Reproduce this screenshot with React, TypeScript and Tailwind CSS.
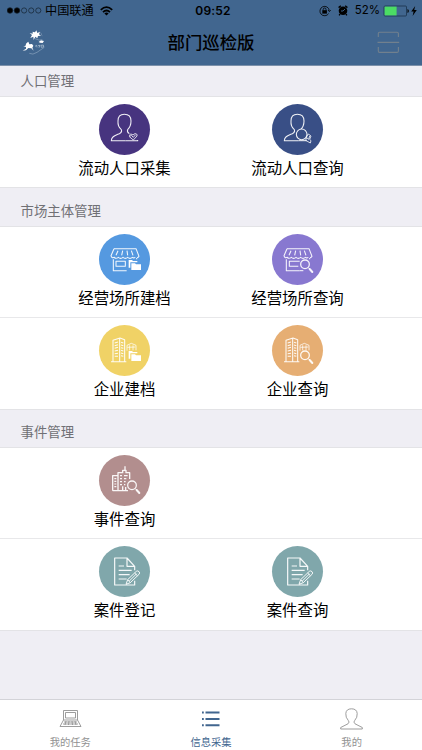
import type { ReactNode } from "react";

const Person = () => (
  <path d="M80 110H37C37 96 50 94 61 89C67 86 69 82 67 77C60 71 56 63 57 51C57 37 65 31 76 31S96 37 96 51C96 63 92 71 86 77C84 82 86 86 91 89" />
);

const Magnifier = () => (
  <>
    <circle cx="99" cy="91" r="13" strokeWidth="3.8" />
    <path d="M109 101L114 106" strokeWidth="3" />
    <path d="M113 105L121 114" strokeWidth="6" strokeLinecap="round" />
  </>
);

const Folders = () => (
  <g fill="#fff" stroke="none">
    <path d="M89 78H99L102 81H115V85H94V101H89Z" />
    <path d="M97 88H108L111 91H126V108H97Z" />
  </g>
);

const PersonCheck = () => (
  <>
    <Person />
    <path d="M80 110H116V108" />
    <path d="M92 96C90 91 96 88 102 93C108 86 116 89 114 96L103 108L91 98L97 94L103 100L110 92" strokeWidth="2.6" />
  </>
);

const PersonSearch = () => (
  <>
    <Person />
    <path d="M80 110H104" />
    <circle cx="89" cy="91" r="16" fill="#394f86" />
    <path d="M102 101L109 90L117 96L113 106L117 110L115 117L101 109L104 101L110 106L113 96" strokeWidth="2.6" />
  </>
);

const Shop = ({ search }: { search?: boolean }) => (
  <>
    <path d="M45 44H111L120 67Q118 71 114 71M45 44L36 65Q38 74 46 70Q50 76 58 70Q65 76 72 70Q79 76 86 70Q93 76 100 70Q104 73 109 70M57 50L51 64M71 50L68 64M84 50L86 64M97 50L102 64" />
    <path d="M43 76V110H83M113 72V76" />
    {search ? <path d="M83 82H52V97H79" /> : <path d="M51 82H79V97H51Z" />}
    {search ? <><path d="M83 110H94" /><Magnifier /></> : <Folders />}
  </>
);

const Tower = ({ search }: { search?: boolean }) => (
  <>
    <path d="M36 110H82M42 109V46L63 39L77 44V109M62 40V109" />
    <path d="M47 54L57 51M47 62L57 59M47 70L57 67M47 78L57 76M47 86L57 85M47 94L57 94M66 52L73 54M66 60L73 62M66 68L73 70M66 76L73 78M66 84L73 86M66 92L73 94" />
    <path d="M84 77V61L97 55L111 61V76M92 61V76M102 61V76M85 67L109 66" strokeWidth="2.4" />
    {search ? <Magnifier /> : <Folders />}
  </>
);

const City = () => (
  <>
    <path d="M41 107V62H57V53H71V46H81V53H92V72M78 34V46M41 107H87M57 62V107M71 94V107M80 96V107" strokeWidth="4" />
    <path d="M46 71H52M46 79H52M46 87H52M46 95H52M63 62H69M75 62H86M63 71H69M75 71H82M63 80H69M75 80H80M63 89H69M75 89H79" strokeWidth="3.5" />
    <Magnifier />
  </>
);

const Document = () => (
  <>
    <path d="M107 104V117H47V36H84L107 61V73M84 36V61H107M59 60H75M59 73H98M59 86H92M59 99H83" strokeWidth="3.6" />
    <path d="M81 115L86 101L112 76Q116 73 120 77T120 85L94 110ZM86 101L94 110M107 81L115 89M91 105L113 83" strokeWidth="3" />
  </>
);

type Entry = { label: string; color: string; icon: ReactNode };
type Section = { title: string; rows: Entry[][] };

const sections: Section[] = [
  {
    title: "人口管理",
    rows: [[
      { label: "流动人口采集", color: "bg-[#47347f]", icon: <PersonCheck /> },
      { label: "流动人口查询", color: "bg-[#394f86]", icon: <PersonSearch /> },
    ]],
  },
  {
    title: "市场主体管理",
    rows: [
      [
        { label: "经营场所建档", color: "bg-[#5599e0]", icon: <Shop /> },
        { label: "经营场所查询", color: "bg-[#8878d0]", icon: <Shop search /> },
      ],
      [
        { label: "企业建档", color: "bg-[#f0d266]", icon: <Tower /> },
        { label: "企业查询", color: "bg-[#e6ae73]", icon: <Tower search /> },
      ],
    ],
  },
  {
    title: "事件管理",
    rows: [
      [{ label: "事件查询", color: "bg-[#b28e8e]", icon: <City /> }],
      [
        { label: "案件登记", color: "bg-[#80a7ab]", icon: <Document /> },
        { label: "案件查询", color: "bg-[#80a7ab]", icon: <Document /> },
      ],
    ],
  },
];

function StatusBar() {
  return (
    <div className="grid h-[21px] grid-cols-3 items-center pr-[5px] pl-[7px] text-[12.5px] leading-none">
      <div className="flex items-center pt-px">
        <svg width="35" height="7" viewBox="0 0 35 7" className="mr-[3px]" fill="none" stroke="#14222f" strokeWidth="0.7">
          <circle cx="3" cy="3.5" r="2.8" fill="#000" />
          <circle cx="10" cy="3.5" r="2.8" fill="#000" />
          <circle cx="17.1" cy="3.5" r="2.6" />
          <circle cx="24.2" cy="3.5" r="2.6" />
          <circle cx="31.3" cy="3.5" r="2.6" />
        </svg>
        <span className="pt-px text-[12.2px] whitespace-nowrap">中国联通</span>
        <svg width="13" height="10" viewBox="0 0 13 10" className="ml-[6px]" fill="none" stroke="#000" strokeWidth="1.8">
          <path d="M.8 3.8Q6.5-1.6 12.2 3.8M3 6.1Q6.5 2.8 10 6.1" />
          <path d="M6.5 9.6L4.4 7.4Q6.5 5.6 8.6 7.4Z" fill="#000" stroke="none" />
        </svg>
      </div>
      <span className="pt-px pl-[2px] text-center font-['Inter','Liberation_Sans',sans-serif] text-[12px] font-semibold tracking-[0.2px]">09:52</span>
      <div className="flex items-center justify-end">
        <svg width="12" height="12" viewBox="0 0 12 12" fill="none" stroke="#000" strokeWidth="0.8">
          <path d="M9.6 8.6A4.7 4.7 0 1 1 10.3 5.5M9 5L10.4 6.6L11.7 5" />
          <path d="M4.2 5.4V4.4Q4.2 3 5.6 3T7 4.4V5.4" />
          <rect x="3.3" y="5.2" width="4.6" height="3.4" fill="#000" stroke="none" />
        </svg>
        <svg width="10" height="11" viewBox="0 0 10 11" className="mr-[7px] ml-[7px]">
          <circle cx="5" cy="5.8" r="4.3" />
          <path d="M.6 2.6L2.8.8M9.4 2.6L7.2.8M2 9L1.2 10.4M8 9L8.8 10.4" stroke="#000" strokeWidth="1.4" />
          <path d="M5 6L7 4M5 6H3" stroke="#41668f" strokeWidth="0.9" />
        </svg>
        <span className="pt-px font-['Inter','Liberation_Sans',sans-serif] text-[11.5px]">52%</span>
        <svg width="26" height="12" viewBox="0 0 26 12" className="ml-[3px]">
          <rect x="1" y="1" width="22.5" height="10" rx="1" fill="none" stroke="#142a40" strokeWidth="0.7" />
          <rect x="1.6" y="1.6" width="12" height="8.8" fill="#4bdc64" />
          <path d="M24.5 4V8Q25.8 7.5 25.8 6T24.5 4Z" />
        </svg>
        <svg width="6" height="10" viewBox="0 0 6 10" className="ml-[2px]">
          <path d="M4.2 0L.2 5.6H2.6L1.6 10L5.8 4.1H3.2Z" />
        </svg>
      </div>
    </div>
  );
}

function Header() {
  return (
    <header className="h-[66px] shrink-0 border-b border-[#7d91aa] bg-[#41668f] text-black">
      <StatusBar />
      <div className="flex h-11 items-center justify-between pr-[22px] pl-[21px]">
        <svg width="25" height="27" viewBox="0 0 75 81" fill="#fff" className="-mt-px">
          <path d="M35 8L42 10L46 4L49 12L57 8L54 16L60 20L51 21L49 28L43 23L38 33L37 23L28 27L33 18L26 12L35 14Z" />
          <path d="M53 39L60 34L69 36L65 42L57 41ZM57 7L61 14L65 23L62 18Z" />
          <path d="M7 52L13 51L16 43L22 38L25 46L33 45L37 50L34 56L38 65L31 58L22 57L15 64L5 65L15 59L15 54Z" />
          <path d="M42 29Q55 36 64 32M25 73Q35 79 48 70T70 55" fill="none" stroke="#aec2d6" strokeWidth="1.4" />
          <path d="M42 52L47 49L48 55M51 50L57 49L54 56M60 49L67 48L68 54L61 55Z" fill="none" stroke="#c3d1df" strokeWidth="1.8" />
        </svg>
        <h1 className="pt-[2px] pr-px text-[17.4px] leading-none font-medium">部门巡检版</h1>
        <svg width="23" height="23" viewBox="0 0 23 23" fill="none" stroke="#71808e" strokeWidth="1.1" className="-mt-px">
          <path d="M1.3 6V2.5Q1.3 1.2 2.5 1.2H20Q21.4 1.2 21.4 2.5V6M1.3 16V20Q1.3 21.4 2.5 21.4H20Q21.4 21.4 21.4 20V16M.5 11.4H22.2" />
        </svg>
      </div>
    </header>
  );
}

function EntryButton({ label, color, icon }: Entry) {
  return (
    <button className="flex w-[173px] flex-col items-center pt-[6.5px]">
      <span className={`size-[51px] rounded-full ${color}`}>
        <svg viewBox="0 0 153 153" fill="none" stroke="#fff" strokeOpacity="0.92" strokeWidth="3.2" strokeLinejoin="round">
          {icon}
        </svg>
      </span>
      <span className="mt-[6.5px] text-[15.4px] leading-[16px] whitespace-nowrap text-black">{label}</span>
    </button>
  );
}

const tabs = [
  {
    label: "我的任务",
    active: false,
    icon: (
      <path d="M4.5 2.5H18.5V12H4.5ZM6.5 4.5H16.5V10H6.5ZM4.5 12L1 18.5H22L18.5 12M5 14H18M4 16H19M7 13L6 17M10 13L9.5 17M13 13L13.5 17M16 13L17 17" />
    ),
  },
  {
    label: "信息采集",
    active: true,
    icon: <path d="M3 4.5H4.8M6.5 4.5H20.5M3 11H4.8M6.5 11H20.5M3 17.2H4.8M6.5 17.2H20.5" strokeWidth="1.9" />,
  },
  {
    label: "我的",
    active: false,
    icon: (
      <path d="M.7 21V19.5L8 15.8Q10 14 8.3 12.5Q5.5 9.5 5.8 5.5Q6.2.8 11.5.8T17.2 5.5Q17.5 9.5 14.7 12.5Q13 14 15 15.8L22.3 19.5V21Z" />
    ),
  },
];

export default function App() {
  return (
    <div className="flex h-[750px] w-[422px] flex-col overflow-hidden bg-[#efeef4] font-['Liberation_Sans','Noto_Sans_CJK_SC',sans-serif]">
      <Header />
      <main className="flex-1">
        {sections.map((section, i) => (
          <section key={section.title}>
            <h2 className={`flex items-end pb-[5px] pl-[20.5px] text-[13.4px] leading-[18px] text-[#707075] ${i === 0 ? "h-[30px]" : i === 1 ? "h-[38px]" : "h-[37.5px]"}`}>
              {section.title}
            </h2>
            <div className="border-y border-[#e3e3e6] bg-white">
              {section.rows.map((row, j) => (
                <div key={j} className={`flex px-[38px] ${j > 0 ? "h-[91.5px] border-t border-[#e8e8ea]" : "h-[90px]"}`}>
                  {row.map((entry) => (
                    <EntryButton key={entry.label} {...entry} />
                  ))}
                </div>
              ))}
            </div>
          </section>
        ))}
      </main>
      <nav className="grid h-[51px] shrink-0 grid-cols-3 border-t border-[#d3d3d8] bg-white">
        {tabs.map((tab) => (
          <button key={tab.label} className={`flex flex-col items-center pt-2 ${tab.active ? "text-[#41668f]" : "text-[#929292]"}`}>
            <svg width="23" height="22" viewBox="0 0 23 22" fill="none" stroke="currentColor" strokeWidth="0.9">
              {tab.icon}
            </svg>
            <span className="mt-[6px] text-[10.3px] leading-[14px]">{tab.label}</span>
          </button>
        ))}
      </nav>
    </div>
  );
}
